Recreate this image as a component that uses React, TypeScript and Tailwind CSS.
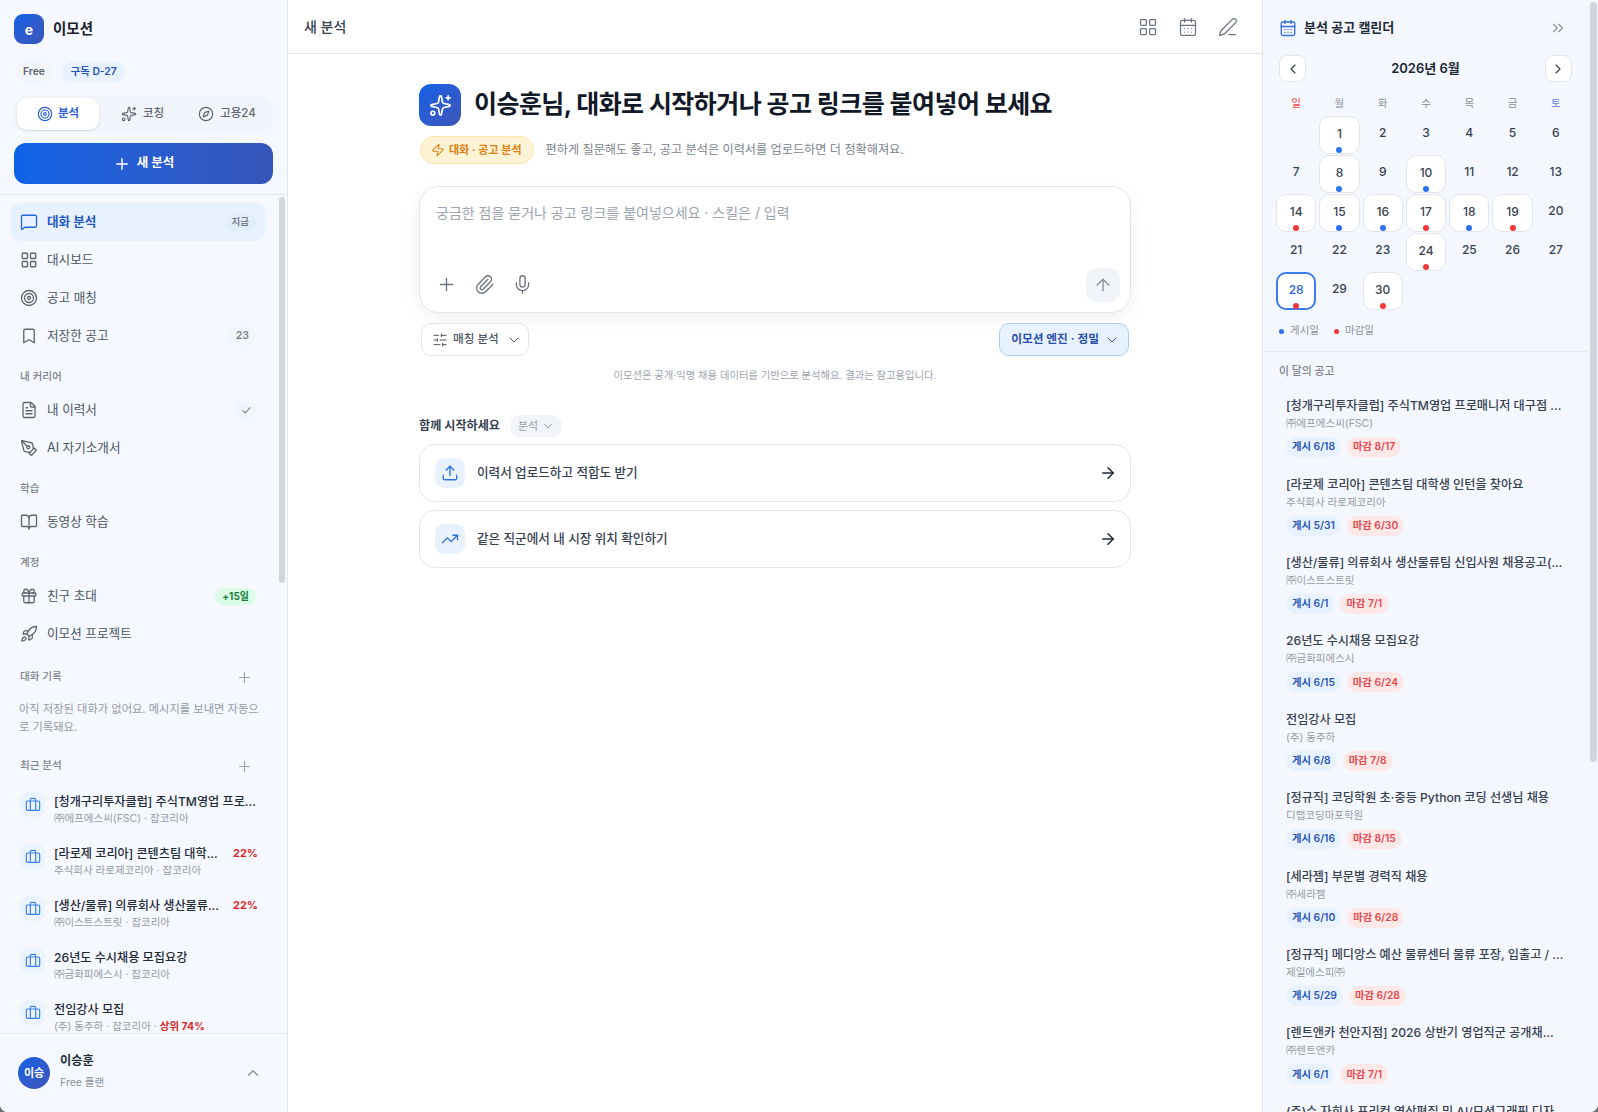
import type { ReactNode } from 'react';
import {
  ArrowRight, ArrowUp, BookOpen, Bookmark, Briefcase, CalendarDays, Check, ChevronDown, ChevronLeft, ChevronRight,
  ChevronUp, ChevronsRight, Compass, FileText, Gift, LayoutGrid, MessageSquare, Mic, Paperclip, PenLine, PenTool,
  Plus, Rocket, SlidersHorizontal, Sparkles, Target, TrendingUp, Upload, Zap,
} from 'lucide-react';

const recent = [
  { title: '[청개구리투자클럽] 주식TM영업 프로...', sub: '㈜에프에스씨(FSC) · 잡코리아' },
  { title: '[라로제 코리아] 콘텐츠팀 대학...', sub: '주식회사 라로제코리아 · 잡코리아', pct: '22%' },
  { title: '[생산/물류] 의류회사 생산물류...', sub: '㈜이스트스트릿 · 잡코리아', pct: '22%' },
  { title: '26년도 수시채용 모집요강', sub: '㈜금화피에스시 · 잡코리아' },
  { title: '전임강사 모집', sub: '(주) 동주하 · 잡코리아 · ', top: '상위 74%' },
];

const jobs = [
  ['[청개구리투자클럽] 주식TM영업 프로매니저 대구점 ...', '㈜에프에스씨(FSC)', '게시 6/18', '마감 8/17'],
  ['[라로제 코리아] 콘텐츠팀 대학생 인턴을 찾아요', '주식회사 라로제코리아', '게시 5/31', '마감 6/30'],
  ['[생산/물류] 의류회사 생산물류팀 신입사원 채용공고(...', '㈜이스트스트릿', '게시 6/1', '마감 7/1'],
  ['26년도 수시채용 모집요강', '㈜금화피에스시', '게시 6/15', '마감 6/24'],
  ['전임강사 모집', '(주) 동주하', '게시 6/8', '마감 7/8'],
  ['[정규직] 코딩학원 초·중등 Python 코딩 선생님 채용', '디랩코딩마포학원', '게시 6/16', '마감 8/15'],
  ['[세라젬] 부문별 경력직 채용', '㈜세라젬', '게시 6/10', '마감 6/28'],
  ['[정규직] 메디앙스 예산 물류센터 물류 포장, 입출고 / ...', '제일에스피㈜', '게시 5/29', '마감 6/28'],
  ['[렌트앤카 천안지점] 2026 상반기 영업직군 공개채...', '㈜렌트앤카', '게시 6/1', '마감 7/1'],
  ['(주)슈 자회사 프리컷 영상편집 및 AI/모션그래픽 디자', '', '', ''],
];

// b: 게시일 파랑 점, r: 마감일 빨강 점
const marks: Record<number, 'b' | 'r'> = {
  1: 'b', 8: 'b', 10: 'b', 14: 'r', 15: 'b', 16: 'b', 17: 'r', 18: 'b', 19: 'r', 24: 'r', 28: 'r', 30: 'r',
};

function NavRow({ icon, label, active, right }: { icon: ReactNode; label: string; active?: boolean; right?: ReactNode }) {
  return (
    <div className={`flex h-[38px] items-center gap-[9px] rounded-xl pl-[10px] pr-[10px] text-[12.6px] ${active ? 'bg-[#e7f2fe] font-bold text-[#2459c4]' : 'text-[#4b5563]'}`}>
      <span className={`flex w-[18px] justify-center ${active ? 'text-[#2563d8]' : 'text-[#5f6670]'}`}>{icon}</span>
      <span className="flex-1">{label}</span>
      {right}
    </div>
  );
}

function CountPill({ children }: { children: ReactNode }) {
  return <span className="flex h-[18px] items-center rounded-full bg-[#f1f4f9] px-[7px] text-[10.5px] font-semibold text-[#7c838d]">{children}</span>;
}

function SectionLabel({ children, plus }: { children: ReactNode; plus?: boolean }) {
  return (
    <div className="flex h-[16px] items-center justify-between pl-[10px] pr-[13px] text-[10.6px] font-medium text-[#7c838d]">
      <span>{children}</span>
      {plus && <Plus size={17} strokeWidth={1.5} className="text-[#9aa1ab]" />}
    </div>
  );
}

function Sidebar() {
  return (
    <aside className="flex h-full w-[288px] shrink-0 flex-col border-r border-[#e2e5ea] bg-[#f5f8fe]">
      <div className="shrink-0 border-b border-[#e2e5ea] px-[14px] pb-[10px] pt-[14px]">
        <div className="flex items-center gap-[9px]">
          <div className="flex h-[30px] w-[30px] items-center justify-center rounded-[9px] bg-gradient-to-br from-[#0f62e6] to-[#3b55b8] text-[14px] font-bold text-white">e</div>
          <span className="text-[14.5px] font-bold text-[#1a202c]">이모션</span>
        </div>
        <div className="mt-[18px] flex h-[20px] items-center gap-[9px] text-[10.3px] font-semibold">
          <span className="ml-[1px] flex h-[20px] items-center rounded-full bg-[#f2f5fa] px-[8px] text-[#5b6470]">Free</span>
          <span className="flex h-[20px] items-center rounded-full bg-[#e7f2fe] px-[9px] text-[#2a56b8]">구독 D-27</span>
        </div>
        <div className="mt-[14px] flex h-[35px] items-center rounded-xl bg-[#f1f5fb] px-[3px] text-[11.5px] font-medium text-[#5f6670]">
          <div className="flex h-[32px] w-[82px] items-center justify-center gap-[5px] rounded-[10px] bg-white font-semibold text-[#2a62d6] shadow-sm">
            <Target size={16} strokeWidth={1.75} />분석
          </div>
          <div className="flex h-[32px] w-[87px] items-center justify-center gap-[6px]">
            <Sparkles size={16} strokeWidth={1.75} />코칭
          </div>
          <div className="flex h-[32px] w-[82px] items-center justify-center gap-[6px]">
            <Compass size={16} strokeWidth={1.75} />고용24
          </div>
        </div>
        <div className="mt-[12px] flex h-[41px] items-center justify-center gap-[6px] rounded-xl bg-gradient-to-r from-[#0c63e7] to-[#3555b9] text-[12.5px] font-bold text-white">
          <Plus size={18} strokeWidth={2} />새 분석
        </div>
      </div>

      <div className="relative min-h-0 flex-1 overflow-hidden">
        <div className="absolute right-[2px] top-[2px] h-[386px] w-[6px] rounded-full bg-[#d2d6dc]" />
        <div className="flex flex-col pl-[10px] pr-[21px] pt-[8px]">
          <NavRow active icon={<MessageSquare size={18} strokeWidth={1.75} />} label="대화 분석" right={<span className="flex h-[18px] items-center rounded-full bg-[#e2eefc] px-[7px] text-[9.5px] font-medium text-[#5f6670]">지금</span>} />
          <NavRow icon={<LayoutGrid size={18} strokeWidth={1.75} />} label="대시보드" />
          <NavRow icon={<Target size={18} strokeWidth={1.75} />} label="공고 매칭" />
          <NavRow icon={<Bookmark size={18} strokeWidth={1.75} />} label="저장한 공고" right={<CountPill>23</CountPill>} />

          <div className="mb-[6px] mt-[14px]"><SectionLabel>내 커리어</SectionLabel></div>
          <NavRow icon={<FileText size={18} strokeWidth={1.75} />} label="내 이력서" right={<span className="flex h-[16px] w-[20px] items-center justify-center rounded-full bg-[#f1f4f9]"><Check size={11} strokeWidth={2.25} className="text-[#6b7280]" /></span>} />
          <NavRow icon={<PenTool size={18} strokeWidth={1.75} />} label="AI 자기소개서" />

          <div className="mb-[6px] mt-[14px]"><SectionLabel>학습</SectionLabel></div>
          <NavRow icon={<BookOpen size={18} strokeWidth={1.75} />} label="동영상 학습" />

          <div className="mb-[6px] mt-[14px]"><SectionLabel>계정</SectionLabel></div>
          <NavRow icon={<Gift size={18} strokeWidth={1.75} />} label="친구 초대" right={<span className="flex h-[17px] items-center rounded-full bg-[#dcfce7] px-[7px] text-[10px] font-bold text-[#15803d]">+15일</span>} />
          <NavRow icon={<Rocket size={18} strokeWidth={1.75} />} label="이모션 프로젝트" />

          <div className="mt-[16px]"><SectionLabel plus>대화 기록</SectionLabel></div>
          <p className="mb-[22px] mt-[15px] pl-[9px] pr-0 text-[11.25px] leading-[18px] text-[#949ba5]">아직 저장된 대화가 없어요. 메시지를 보내면 자동으로 기록돼요.</p>

          <SectionLabel plus>최근 분석</SectionLabel>
          <div className="mt-[9px] flex flex-col">
            {recent.map((r) => (
              <div key={r.title} className="flex h-[52px] items-center gap-[9px] pl-[10px] pr-[8px]">
                <div className="-mt-[9px] flex h-[25px] w-[25px] shrink-0 items-center justify-center rounded-[8px] bg-[#ebf4fe] text-[#3b7cf0]">
                  <Briefcase size={16} strokeWidth={1.75} />
                </div>
                <div className="min-w-0 flex-1 pt-[1px]">
                  <div className="flex items-center justify-between gap-[8px] text-[12.15px] font-medium leading-[17px] text-[#1f2937]">
                    <span className="truncate">{r.title}</span>
                    {r.pct && <span className="shrink-0 text-[11px] font-bold text-[#dc2626]">{r.pct}</span>}
                  </div>
                  <div className="truncate text-[10.5px] leading-[17px] text-[#969ca6]">
                    {r.sub}
                    {r.top && <span className="font-bold text-[#dc2626]">{r.top}</span>}
                  </div>
                </div>
              </div>
            ))}
          </div>
        </div>
      </div>

      <div className="flex h-[79px] shrink-0 items-center gap-[10px] border-t border-[#e2e5ea] bg-[#f5f8fe] pl-[18px] pr-[25px]">
        <div className="flex h-[32px] w-[32px] items-center justify-center rounded-full bg-gradient-to-br from-[#0f62e6] to-[#3b55b8] text-[11px] font-bold text-white">이승</div>
        <div className="flex-1 pb-[2px]">
          <div className="text-[12.2px] font-semibold leading-[22px] text-[#1f2937]">이승훈</div>
          <div className="text-[10.5px] leading-[22px] text-[#8a919b]">Free 플랜</div>
        </div>
        <ChevronUp size={18} strokeWidth={1.75} className="text-[#8a919b]" />
      </div>
    </aside>
  );
}

function Composer() {
  return (
    <div className="mt-[22px] flex h-[127px] flex-col rounded-[20px] border border-[#e2e5ea] bg-white pb-[10px] pl-[16px] pr-[10px] pt-[16px] shadow-[0_6px_20px_rgba(15,23,42,0.06)]">
      <div className="flex-1 text-[14px] leading-[19px] text-[#9ca3af]">궁금한 점을 묻거나 공고 링크를 붙여넣으세요 · 스킬은 / 입력</div>
      <div className="flex items-center">
        <div className="flex flex-1 items-center gap-[17px] pb-[2px] text-[#6b7280]">
          <Plus size={21} strokeWidth={1.5} />
          <Paperclip size={21} strokeWidth={1.5} />
          <Mic size={21} strokeWidth={1.5} />
        </div>
        <div className="flex h-[34px] w-[34px] items-center justify-center rounded-[10px] bg-[#f1f4f8] text-[#8e95a0]">
          <ArrowUp size={20} strokeWidth={1.75} />
        </div>
      </div>
    </div>
  );
}

function Starter({ icon, label }: { icon: ReactNode; label: string }) {
  return (
    <div className="flex h-[58px] items-center gap-[12px] rounded-[16px] border border-[#e2e5ea] bg-white pl-[15px] pr-[13px]">
      <div className="flex h-[30px] w-[30px] items-center justify-center rounded-[9px] bg-[#e8f2fe] text-[#2f6fe0]">{icon}</div>
      <span className="flex-1 text-[12.6px] font-medium text-[#374151]">{label}</span>
      <ArrowRight size={18} strokeWidth={2} className="text-[#1f2937]" />
    </div>
  );
}

function Main() {
  return (
    <main className="flex min-w-0 flex-1 flex-col bg-white">
      <header className="flex h-[54px] shrink-0 items-center justify-between border-b border-[#e2e5ea] pl-[16px] pr-[24px]">
        <span className="text-[14px] font-medium text-[#374151]">새 분석</span>
        <div className="flex items-center gap-[20px] text-[#6b7280]">
          <LayoutGrid size={20} strokeWidth={1.5} />
          <CalendarDays size={20} strokeWidth={1.5} />
          <PenLine size={20} strokeWidth={1.5} />
        </div>
      </header>

      <div className="mx-auto w-[712px] pt-[30px]">
        <div className="flex items-center gap-[13px]">
          <div className="flex h-[42px] w-[42px] shrink-0 items-center justify-center rounded-[12px] bg-gradient-to-br from-[#0f62e6] to-[#3b55b8] text-white">
            <Sparkles size={23} strokeWidth={1.75} />
          </div>
          <h1 className="text-[25px] font-bold tracking-[-0.55px] text-[#111827]">이승훈님, 대화로 시작하거나 공고 링크를 붙여넣어 보세요</h1>
        </div>

        <div className="mt-[10px] flex items-center gap-[12px]">
          <span className="ml-[1px] flex h-[28px] items-center gap-[4px] rounded-full border border-[#fde3a7] bg-[#fef3d5] pl-[10px] pr-[11px] text-[11px] font-semibold text-[#dd7f14]">
            <Zap size={14} strokeWidth={1.75} />대화 · 공고 분석
          </span>
          <span className="pt-[1px] text-[12.15px] text-[#7c838d]">편하게 질문해도 좋고, 공고 분석은 이력서를 업로드하면 더 정확해져요.</span>
        </div>

        <Composer />

        <div className="mt-[10px] flex items-center justify-between pl-[2px] pr-[2px]">
          <div className="flex h-[33px] items-center rounded-[10px] border border-[#e2e5ea] bg-white pl-[10px] pr-[6px] text-[11.6px] font-medium text-[#4b5563]">
            <SlidersHorizontal size={16} strokeWidth={1.5} className="mr-[5px]" />매칭 분석<ChevronDown size={16} strokeWidth={1.5} className="ml-[7px]" />
          </div>
          <div className="flex h-[33px] items-center gap-[5px] rounded-[10px] border border-[#a9cdf8] bg-[#e7f2fe] pl-[11px] pr-[8px] text-[11.7px] font-semibold text-[#2a4fa8]">
            이모션 엔진 · 정밀<ChevronDown size={16} strokeWidth={1.5} />
          </div>
        </div>

        <p className="mt-[11px] text-center text-[10.3px] leading-[16px] text-[#9ca3af]">이모션은 공개·익명 채용 데이터를 기반으로 분석해요. 결과는 참고용입니다.</p>

        <div className="mt-[32px] flex h-[22px] items-center gap-[10px]">
          <span className="text-[12.1px] font-semibold text-[#374151]">함께 시작하세요</span>
          <span className="flex h-[22px] items-center gap-[3px] rounded-full bg-[#f1f4f9] pl-[8px] pr-[7px] text-[10.9px] text-[#9aa1ab]">분석<ChevronDown size={14} strokeWidth={1.75} /></span>
        </div>

        <div className="mt-[7px] flex flex-col gap-[8px]">
          <Starter icon={<Upload size={18} strokeWidth={1.75} />} label="이력서 업로드하고 적합도 받기" />
          <Starter icon={<TrendingUp size={18} strokeWidth={1.75} />} label="같은 직군에서 내 시장 위치 확인하기" />
        </div>
      </div>
    </main>
  );
}

function Calendar() {
  const cells: (number | null)[] = [null, ...Array.from({ length: 30 }, (_, i) => i + 1)];
  const days = ['일', '월', '화', '수', '목', '금', '토'];
  return (
    <div className="pl-[13px] pr-[22px]">
      <div className="mt-[18px] flex h-[27px] items-center justify-between pl-[3px] pr-[4px]">
        <span className="flex h-[27px] w-[27px] items-center justify-center rounded-[8px] border border-[#e2e5ea] bg-white text-[#374151]"><ChevronLeft size={16} strokeWidth={1.75} /></span>
        <span className="text-[13px] font-semibold text-[#1f2937]">2026년 6월</span>
        <span className="flex h-[27px] w-[27px] items-center justify-center rounded-[8px] border border-[#e2e5ea] bg-white text-[#374151]"><ChevronRight size={16} strokeWidth={1.75} /></span>
      </div>
      <div className="mt-[14px] grid h-[16px] grid-cols-7 items-center gap-x-[3px] text-center text-[10.5px] text-[#8a919b]">
        {days.map((d) => (
          <span key={d} className={d === '일' ? 'text-[#ef4444]' : d === '토' ? 'text-[#5f7ef0]' : ''}>{d}</span>
        ))}
      </div>
      <div className="mt-[4px] grid grid-cols-7 gap-x-[3px] gap-y-[1px]">
        {cells.map((n, i) => {
          const mark = n ? marks[n] : undefined;
          const today = n === 28;
          return (
            <div
              key={i}
              className={`relative flex h-[38px] items-center justify-center rounded-[10px] text-[12px] font-medium ${today ? 'border-2 border-[#3b7cf0] bg-white pb-[2px] font-bold text-[#2a62d6]' : mark ? 'border border-[#e2e5ea] bg-white pb-[2px] text-[#374151]' : 'pb-[5px] text-[#374151]'}`}
            >
              {n}
              {mark && <span className={`absolute left-1/2 h-[6px] w-[6px] -translate-x-1/2 rounded-full ${today ? 'bottom-[-1px]' : 'bottom-0'} ${mark === 'b' ? 'bg-[#2b74f0]' : 'bg-[#f03838]'}`} />}
            </div>
          );
        })}
      </div>
      <div className="mt-[13px] flex h-[16px] items-center gap-[15px] pl-[3px] text-[10.5px] text-[#8a919b]">
        <span className="flex items-center gap-[6px]"><i className="h-[5px] w-[5px] rounded-full bg-[#2b74f0]" />게시일</span>
        <span className="flex items-center gap-[6px]"><i className="h-[5px] w-[5px] rounded-full bg-[#f03838]" />마감일</span>
      </div>
    </div>
  );
}

function RightPanel() {
  return (
    <aside className="relative flex h-full w-[336px] shrink-0 flex-col overflow-hidden border-l border-[#e2e5ea] bg-[#f4f7fd]">
      <div className="absolute right-[1px] top-[2px] h-[760px] w-[7px] rounded-full bg-[#d2d6dc]" />
      <div>
        <div className="mt-[19px] flex h-[18px] items-center gap-[7px] pl-[16px] pr-[31px]">
          <CalendarDays size={18} strokeWidth={1.75} className="text-[#2f6fe0]" />
          <span className="flex-1 text-[13px] font-semibold text-[#1f2937]">분석 공고 캘린더</span>
          <ChevronsRight size={18} strokeWidth={1.5} className="text-[#8a919b]" />
        </div>
        <Calendar />
        <div className="ml-[1px] mr-[10px] mt-[12px] border-t border-[#e5e9f0]" />
        <div className="mt-[12px] pl-[16px] text-[10.8px] font-medium text-[#7c838d]">이 달의 공고</div>
        <div className="mt-[17px] flex flex-col pl-[23px] pr-[30px]">
          {jobs.map(([title, co, post, end]) => (
            <div key={title} className="h-[78.4px] shrink-0">
              <div className="truncate text-[12.15px] font-medium leading-[18px] text-[#374151]">{title}</div>
              <div className="truncate text-[10.5px] leading-[18px] text-[#969ca6]">{co}</div>
              {post && (
                <div className="mt-[4px] flex gap-[6px] text-[10.3px] font-semibold">
                  <span className="flex h-[20px] items-center rounded-full bg-[#e7f2fe] px-[6px] text-[#2a56b8]">{post}</span>
                  <span className="flex h-[20px] items-center rounded-full bg-[#fde8e8] px-[6px] text-[#e5484d]">{end}</span>
                </div>
              )}
            </div>
          ))}
        </div>
      </div>
    </aside>
  );
}

export default function App() {
  return (
    <div className="h-screen w-full overflow-hidden bg-[#6b7078] font-['Inter','Noto_Sans_CJK_KR',sans-serif]">
      <div className="flex h-full overflow-hidden rounded-b-[8px] bg-white">
        <Sidebar />
        <Main />
        <RightPanel />
      </div>
    </div>
  );
}
